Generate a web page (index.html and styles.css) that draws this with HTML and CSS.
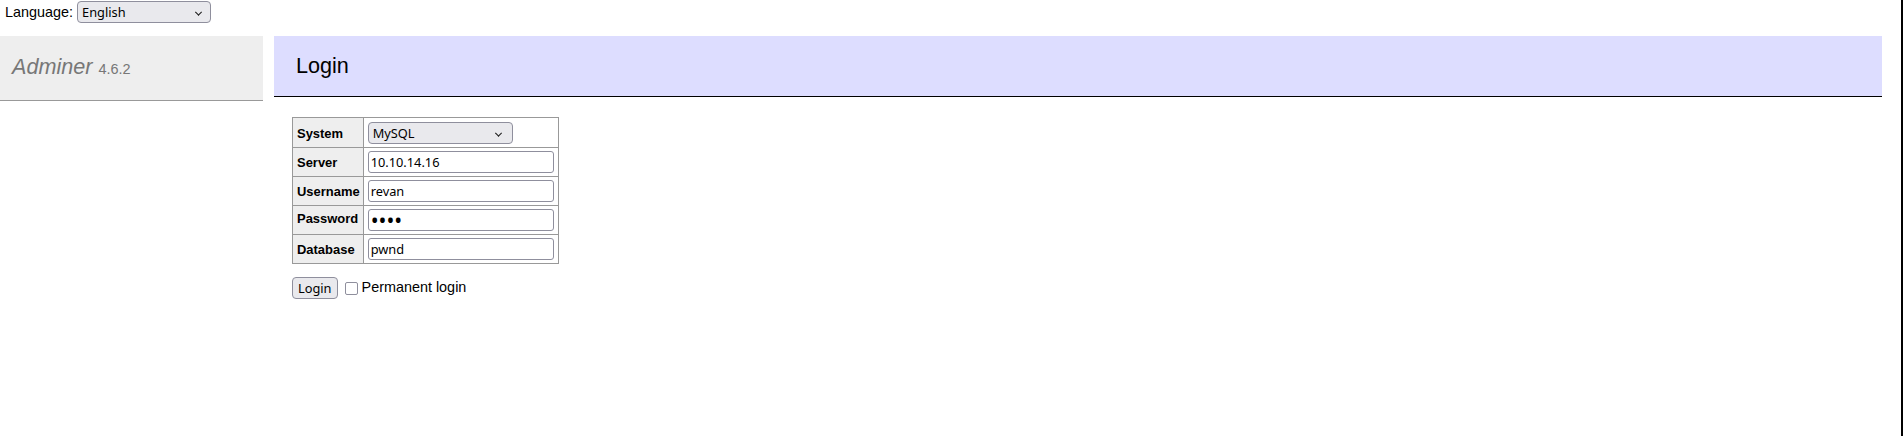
FILE: index.html
```html
<!DOCTYPE html>
<html lang="en">
<head>
<meta charset="utf-8">
<title>Login - Adminer</title>
<link rel="stylesheet" href="styles.css">
</head>
<body>
<div class="page">
  <form class="lang" action="">
    <label class="lang-label">Language:
      <span class="sel-wrap sel-lang-wrap"><select class="ctl-select sel-lang"><option>English</option></select></span>
    </label>
  </form>
  <div class="main">
    <div class="menu">
      <h1 class="brand-bar"><a class="brand" href="#">Adminer</a> <span class="version">4.6.2</span></h1>
    </div>
    <div class="content">
      <h2 class="title">Login</h2>
      <form class="login-form" action="">
        <table class="login">
          <tr class="row-first"><th>System</th><td><span class="sel-wrap sel-driver-wrap"><select class="ctl-select sel-driver"><option>MySQL</option></select></span></td></tr>
          <tr><th>Server</th><td><input class="ctl-input" type="text" value="10.10.14.16"></td></tr>
          <tr><th>Username</th><td><input class="ctl-input" type="text" value="revan"></td></tr>
          <tr class="row-pass"><th>Password</th><td><input class="ctl-input ctl-pass" type="password" value="pwnd"></td></tr>
          <tr><th>Database</th><td><input class="ctl-input" type="text" value="pwnd"></td></tr>
        </table>
        <p class="actions">
          <input class="btn" type="submit" value="Login">
          <label class="perm"><input class="chk" type="checkbox"> Permanent login</label>
        </p>
      </form>
    </div>
  </div>
</div>
</body>
</html>
```

FILE: styles.css
```css
* { box-sizing: border-box; }
html, body { margin: 0; padding: 0; background: #fff; }
body {
  font: 14.4px/1.25 "Liberation Sans", Arial, sans-serif;
  color: #000;
}
.page {
  min-height: 100vh;
  border-right: 2px solid #000;
  display: flex;
  flex-direction: column;
}

/* language bar */
.lang {
  height: 36px;
  margin: 0;
  padding: 1px 5px 0;
}
.lang-label {
  display: inline-flex;
  align-items: baseline;
  gap: 4px;
}

/* selects */
.sel-wrap {
  position: relative;
  display: inline-block;
}
.sel-wrap::after {
  content: "";
  position: absolute;
  top: 50%;
  width: 4px;
  height: 4px;
  border-right: 1.5px solid #1a1a1a;
  border-bottom: 1.5px solid #1a1a1a;
  transform: translateY(-45%) rotate(45deg);
  pointer-events: none;
}
.sel-lang-wrap::after { right: 10px; }
.sel-driver-wrap::after { right: 12px; }
.ctl-select {
  -webkit-appearance: none;
  appearance: none;
  font: 12.8px "Noto Sans", sans-serif;
  color: #000;
  background: #e9e9ed;
  border: 1px solid #8f8f9d;
  border-radius: 4px;
  height: 22px;
  margin: 0;
  padding: 0 20px 0 4px;
}
.sel-lang { width: 134px; }
.sel-driver { width: 145px; }

/* layout */
.main {
  display: flex;
  align-items: flex-start;
}
.menu {
  width: 263px;
  flex: none;
}
.brand-bar {
  margin: 0;
  font-size: 21.6px;
  line-height: 27px;
  font-weight: normal;
  padding: 17px 12px;
  background: #eee;
  color: #777;
  border-bottom: 1px solid #999;
}
.brand {
  color: #777;
  font-style: italic;
  text-decoration: none;
}
.version {
  color: #777;
  font-size: 67%;
}
.content {
  flex: 1;
  padding: 0 19px 20px 11px;
}
.title {
  margin: 0;
  font-size: 21.6px;
  line-height: 27px;
  font-weight: normal;
  color: #000;
  background: #ddf;
  padding: 16px 22px 17px;
  border-bottom: 1px solid #000;
}
.login-form {
  margin: 0 0 0 18px;
}

/* login table */
.login {
  border-collapse: collapse;
  font-size: 12.96px;
  margin: 20px 0 0;
}
.login th, .login td {
  border: 1px solid #999;
  vertical-align: baseline;
}
.login th {
  background: #eee;
  text-align: left;
  font-weight: bold;
  padding: 3px 3px 3px 4px;
}
.login td {
  padding: 3px 4px 3px 4px;
}
.login .row-first td {
  padding-top: 4px;
}
.login .row-pass th,
.login .row-pass td {
  vertical-align: top;
}
.login .row-pass th {
  padding-top: 5px;
}
.ctl-input {
  font: 12.8px "Noto Sans", sans-serif;
  color: #000;
  width: 186px;
  height: 22px;
  margin: 0;
  padding: 0 2px;
  background: #fff;
  border: 1px solid #8f8f9d;
  border-radius: 3px;
  vertical-align: baseline;
}
.ctl-pass {
  display: block;
  font-size: 21px;
  letter-spacing: 0;
}

/* actions */
.actions {
  display: flex;
  align-items: center;
  margin: 13px 0 0;
}
.btn {
  -webkit-appearance: none;
  appearance: none;
  font: 12.8px "Noto Sans", sans-serif;
  color: #000;
  background: #e9e9ed;
  border: 1px solid #8f8f9d;
  border-radius: 4px;
  height: 22px;
  padding: 0 5px;
  margin: 0 7px 0 0;
}
.perm {
  display: inline-flex;
  align-items: center;
  gap: 4px;
  margin-bottom: 3px;
}
.chk {
  -webkit-appearance: none;
  appearance: none;
  width: 13px;
  height: 13px;
  margin: 3px 0 0;
  background: #fff;
  border: 1px solid #8f8f9d;
  border-radius: 2px;
}
```
